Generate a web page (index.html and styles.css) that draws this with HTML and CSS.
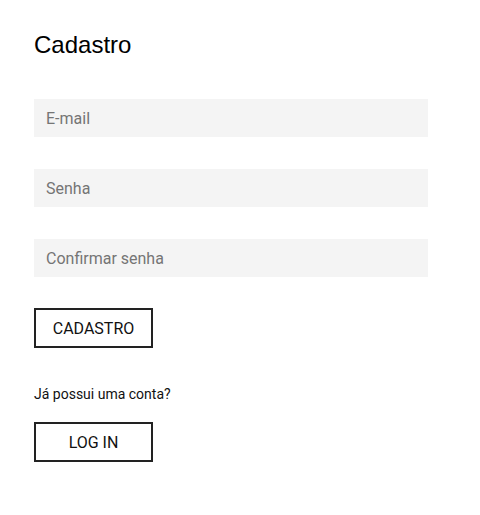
FILE: index.html
```html
<!DOCTYPE html>
<html lang="pt">
<head>
<meta charset="utf-8">
<title>Cadastro</title>
<link rel="stylesheet" href="styles.css">
</head>
<body>
<main class="page">
  <h1 class="title">Cadastro</h1>
  <form class="form">
    <input class="field" type="email" placeholder="E-mail">
    <input class="field" type="password" placeholder="Senha">
    <input class="field" type="password" placeholder="Confirmar senha">
    <button class="btn btn-submit" type="button">CADASTRO</button>
  </form>
  <p class="hint">Já possui uma conta?</p>
  <button class="btn" type="button">LOG IN</button>
</main>
</body>
</html>
```
FILE: styles.css
```css
html, body {
  margin: 0;
  padding: 0;
  background: #fff;
}
.page {
  padding: 31px 34px 0 34px;
  display: flex;
  flex-direction: column;
  align-items: flex-start;
  font-family: Roboto, "Liberation Sans", sans-serif;
}
.title {
  margin: 0 0 40px 0;
  font-family: "Liberation Sans", Arial, sans-serif;
  font-weight: normal;
  font-size: 24px;
  line-height: 28px;
  color: #000;
}
.form {
  display: flex;
  flex-direction: column;
  align-items: flex-start;
  gap: 32px;
  margin: 0;
}
.field {
  box-sizing: border-box;
  width: 394px;
  height: 38px;
  border: none;
  outline: none;
  background: #f4f4f4;
  padding: 0 12px;
  margin: 0;
  font-family: Roboto, sans-serif;
  font-size: 16px;
  color: #222;
}
.field::placeholder {
  color: #757575;
  opacity: 1;
}
.btn {
  box-sizing: border-box;
  width: 119px;
  height: 40px;
  background: #fff;
  border: 2px solid #222;
  border-radius: 0;
  padding: 0;
  font-family: Roboto, sans-serif;
  font-size: 16px;
  color: #111;
  cursor: pointer;
}
.btn-submit {
  margin-top: -1px;
}
.hint {
  margin: 36px 0 18px 0;
  font-size: 14px;
  line-height: 20px;
  color: #111;
}
```
